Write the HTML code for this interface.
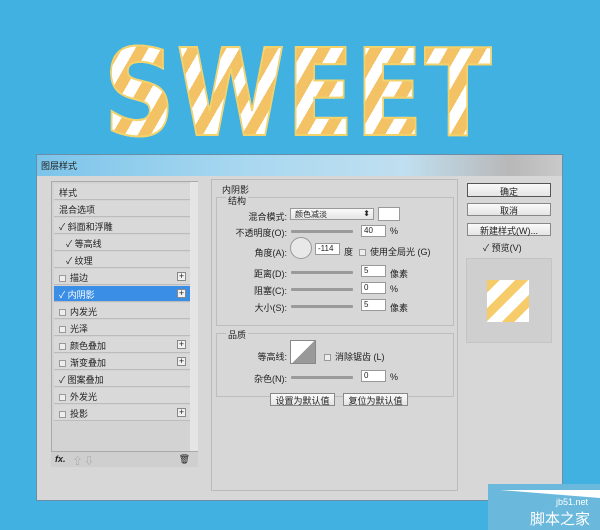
<!DOCTYPE html>
<html><head><meta charset="utf-8"><style>
*{margin:0;padding:0;box-sizing:border-box}
body{width:600px;height:530px;background:#41b1e2;position:relative;overflow:hidden;font-family:"Liberation Sans","Noto Sans CJK SC",sans-serif;font-size:9px;color:#222}
.a{position:absolute}
.sweet{left:104px;top:35px;font:900 120px/1 "DejaVu Sans","Liberation Sans",sans-serif;letter-spacing:2px;color:transparent;background:repeating-linear-gradient(125deg,#fff 0 13px,#f2c265 13px 26px);-webkit-background-clip:text;background-clip:text;-webkit-text-stroke:2px #f4d26a;transform:scaleX(0.82);transform-origin:0 0;white-space:nowrap}
.dlg{left:36px;top:154px;width:527px;height:347px;background:#d7d7d7;border:1px solid #6b8ea8}
.title{left:0;top:0;width:525px;height:21px;background:linear-gradient(90deg,#7cc4ea,#a9d8f0 40%,#c0dff0 70%,#b8b8b8 90%,#c9c9c9);font-size:9px;padding:4px 0 0 4px}
.lp{left:14px;top:26px;width:147px;height:286px;background:#d3d3d3;border:1px solid #aaa}
.it{position:absolute;left:2px;width:136px;height:16px;border-bottom:1px solid #bcbcbc;background:#d9d9d9;padding:2px 0 0 5px;font-size:9px}
.cb{display:inline-block;width:7px;height:7px;border:1px solid #999;background:#eee;margin-right:4px;vertical-align:-1px}
.pl{position:absolute;right:4px;top:3px;width:9px;height:9px;border:1px solid #888;background:#f2f2f2;font-size:9px;line-height:7px;text-align:center}
.sel{background:#3a8ee6;color:#fff}
.sb{left:153px;top:27px;width:8px;height:284px;background:#e5e5e5}
.bb{left:14px;top:296px;width:147px;height:16px;background:#cfcfcf;border-top:1px solid #aaa;font-size:9px}
.cp{left:174px;top:24px;width:247px;height:312px;border:1px solid #bbb}
.grp{border:1px solid #bdbdbd;position:absolute}
.lbl{position:absolute;font-size:9px;text-align:right}
.in{position:absolute;width:25px;height:12px;background:#fff;border:1px solid #999;font-size:8px;padding-left:2px}
.sl{position:absolute;height:3px;background:#9a9a9a;width:62px;border-radius:1px}
.btn{position:absolute;background:linear-gradient(#fafafa,#e4e4e4);border:1px solid #888;font-size:9px;text-align:center}
</style></head><body>
<div class="a sweet">SWEET</div>
<div class="a dlg">
 <div class="a title">图层样式</div>
 <div class="a lp">
  <div class="it" style="top:2px">样式</div>
  <div class="it" style="top:19px">混合选项</div>
  <div class="it" style="top:36px">✓ 斜面和浮雕</div>
  <div class="it" style="top:53px;padding-left:12px">✓ 等高线</div>
  <div class="it" style="top:70px;padding-left:12px">✓ 纹理</div>
  <div class="it" style="top:87px"><span class="cb"></span>描边<span class="pl">+</span></div>
  <div class="it sel" style="top:104px">✓ 内阴影<span class="pl" style="color:#222">+</span></div>
  <div class="it" style="top:121px"><span class="cb"></span>内发光</div>
  <div class="it" style="top:138px"><span class="cb"></span>光泽</div>
  <div class="it" style="top:155px"><span class="cb"></span>颜色叠加<span class="pl">+</span></div>
  <div class="it" style="top:172px"><span class="cb"></span>渐变叠加<span class="pl">+</span></div>
  <div class="it" style="top:189px">✓ 图案叠加</div>
  <div class="it" style="top:206px"><span class="cb"></span>外发光</div>
  <div class="it" style="top:223px"><span class="cb"></span>投影<span class="pl">+</span></div>
 </div>
 <div class="a sb"></div>
 <div class="a bb"><span style="position:absolute;left:4px;top:2px;font-style:italic;font-weight:bold">fx.</span><span style="position:absolute;left:22px;top:2px;color:#999">⇧ ⇩</span><span style="position:absolute;right:8px;top:2px">🗑</span></div>
 <div class="a cp">
  <div class="lbl" style="left:10px;top:3px">内阴影</div>
  <div class="grp" style="left:4px;top:17px;width:238px;height:129px"></div>
  <div class="lbl" style="left:14px;top:14px;background:#d7d7d7;padding:0 2px">结构</div>
  <div class="lbl" style="left:10px;top:30px;width:65px">混合模式:</div>
  <div class="a" style="left:78px;top:28px;width:84px;height:12px;background:linear-gradient(#fafafa,#e5e5e5);border:1px solid #999;font-size:8px;padding-left:4px">颜色减淡<span style="float:right;margin-right:3px">⬍</span></div>
  <div class="a" style="left:166px;top:27px;width:22px;height:14px;background:#fff;border:1px solid #999"></div>
  <div class="lbl" style="left:2px;top:46px;width:73px">不透明度(O):</div>
  <div class="sl" style="left:79px;top:50px"></div>
  <div class="in" style="left:149px;top:45px">40</div><div class="lbl" style="left:178px;top:46px">%</div>
  <div class="lbl" style="left:10px;top:66px;width:65px">角度(A):</div>
  <div class="a" style="left:78px;top:57px;width:22px;height:22px;border-radius:50%;border:1px solid #999;background:#e8e8e8"></div>
  <div class="in" style="left:103px;top:63px">-114</div><div class="lbl" style="left:132px;top:65px">度</div>
  <div class="lbl" style="left:147px;top:65px"><span class="cb"></span>使用全局光 (G)</div>
  <div class="lbl" style="left:10px;top:87px;width:65px">距离(D):</div>
  <div class="sl" style="left:79px;top:91px"></div>
  <div class="in" style="left:149px;top:85px">5</div><div class="lbl" style="left:178px;top:87px">像素</div>
  <div class="lbl" style="left:10px;top:104px;width:65px">阻塞(C):</div>
  <div class="sl" style="left:79px;top:108px"></div>
  <div class="in" style="left:149px;top:102px">0</div><div class="lbl" style="left:178px;top:104px">%</div>
  <div class="lbl" style="left:10px;top:121px;width:65px">大小(S):</div>
  <div class="sl" style="left:79px;top:125px"></div>
  <div class="in" style="left:149px;top:119px">5</div><div class="lbl" style="left:178px;top:121px">像素</div>
  <div class="grp" style="left:4px;top:153px;width:238px;height:64px"></div>
  <div class="lbl" style="left:14px;top:148px;background:#d7d7d7;padding:0 2px">品质</div>
  <div class="lbl" style="left:10px;top:170px;width:65px">等高线:</div>
  <div class="a" style="left:78px;top:160px;width:26px;height:24px;background:linear-gradient(135deg,#fff 50%,#999 50%);border:1px solid #888"></div>
  <div class="lbl" style="left:112px;top:170px"><span class="cb"></span>消除锯齿 (L)</div>
  <div class="lbl" style="left:10px;top:192px;width:65px">杂色(N):</div>
  <div class="sl" style="left:79px;top:196px"></div>
  <div class="in" style="left:149px;top:190px">0</div><div class="lbl" style="left:178px;top:192px">%</div>
  <div class="btn" style="left:58px;top:213px;width:65px;height:13px">设置为默认值</div>
  <div class="btn" style="left:131px;top:213px;width:65px;height:13px">复位为默认值</div>
 </div>
 <div class="btn" style="left:430px;top:28px;width:84px;height:14px;padding-top:1px;border-color:#555">确定</div>
 <div class="btn" style="left:430px;top:48px;width:84px;height:13px">取消</div>
 <div class="btn" style="left:430px;top:68px;width:84px;height:13px">新建样式(W)...</div>
 <div class="lbl" style="left:446px;top:86px">✓ 预览(V)</div>
 <div class="a" style="left:429px;top:103px;width:86px;height:85px;background:#cfcfcf;border:1px solid #c4c4c4"></div>
 <div class="a" style="left:450px;top:125px;width:42px;height:42px;background:repeating-linear-gradient(135deg,#f6cc6a 0 9px,#fff 9px 20px)"></div>
</div>
<div class="a" style="left:488px;top:484px;width:112px;height:46px;background:#6ab8dc"></div>
<div class="a" style="left:500px;top:490px;width:0;height:0;border-left:100px solid transparent;border-top:8px solid #fff"></div>
<div class="a" style="left:556px;top:497px;font-size:9px;color:#fff">jb51.net</div>
<div class="a" style="left:530px;top:508px;font-size:15px;color:#fff">脚本之家</div>
</body></html>
